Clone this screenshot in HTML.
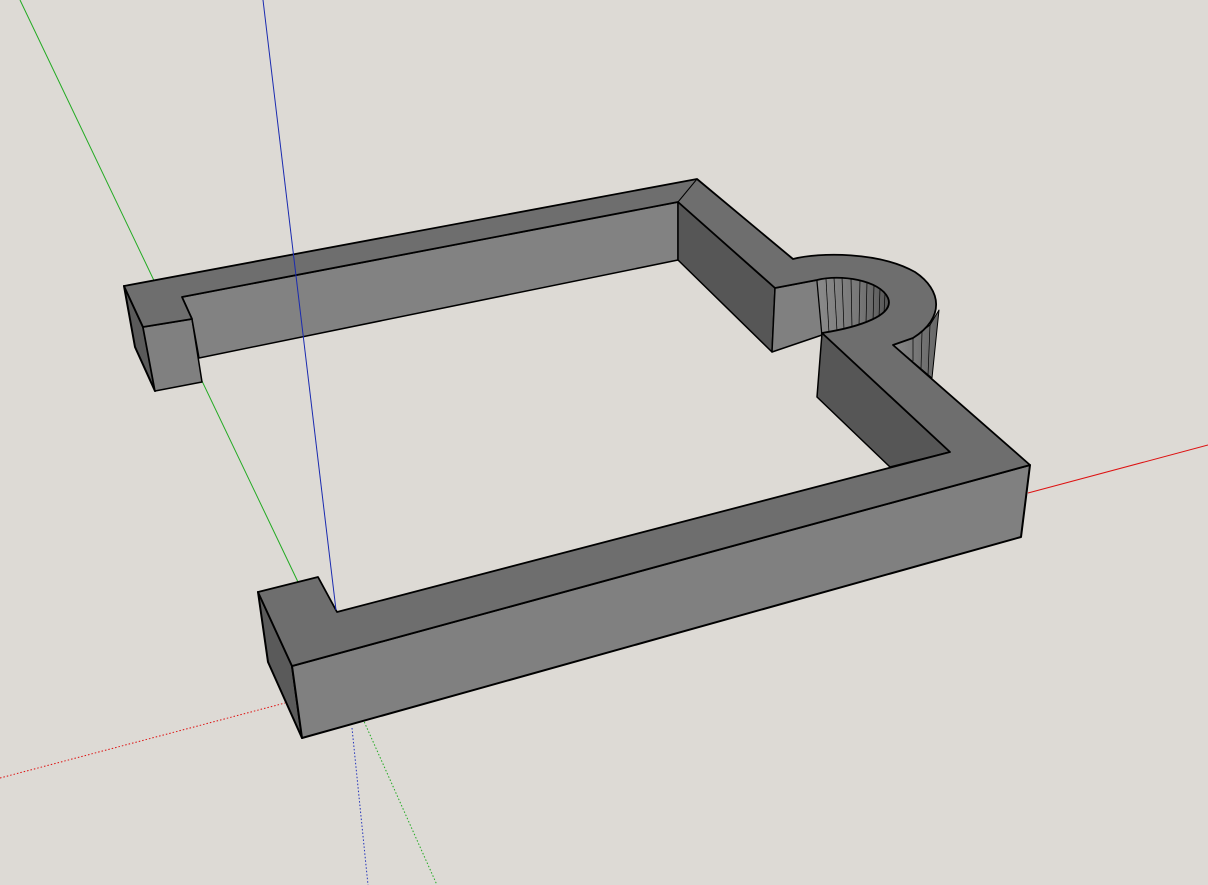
<!DOCTYPE html>
<html><head><meta charset="utf-8"><style>html,body{margin:0;padding:0;background:#dddad5;}svg{display:block}</style></head>
<body>
<svg width="1208" height="885" viewBox="0 0 1208 885" xmlns="http://www.w3.org/2000/svg">
<rect width="1208" height="885" fill="#dddad5"/>
<line x1="20" y1="0" x2="298" y2="582" stroke="#22aa22" stroke-width="1"/>
<line x1="350" y1="690" x2="437" y2="885" stroke="#22aa22" stroke-width="1" stroke-dasharray="1.5,2"/>
<line x1="1028" y1="493" x2="1208" y2="445" stroke="#dd1111" stroke-width="1"/>
<line x1="0" y1="778" x2="285" y2="703" stroke="#dd1111" stroke-width="1" stroke-dasharray="1.5,2"/>
<line x1="352" y1="728" x2="368" y2="885" stroke="#2233bb" stroke-width="1" stroke-dasharray="1.5,2"/>
<defs>
<linearGradient id="cy" x1="0" x2="1" y1="0" y2="0">
<stop offset="0" stop-color="#8a8a8a"/><stop offset="0.6" stop-color="#777"/><stop offset="1" stop-color="#555"/>
</linearGradient>
<linearGradient id="cy2" x1="0" x2="1" y1="0" y2="0">
<stop offset="0" stop-color="#888"/><stop offset="1" stop-color="#666"/>
</linearGradient>
</defs>
<g stroke="#000" stroke-linejoin="round">
<polygon points="124,286 143,327 155,391 135,347" fill="#5a5a5a" stroke-width="2"/>
<polygon points="143,327 192,319 202,382 155,391" fill="#808080" stroke-width="1.5"/>
<polygon points="182,297 678,202 678,260 199,358 192,319" fill="#828282" stroke-width="1.5"/>
<polygon points="678,202 775,288 772,352 678,260" fill="#565656" stroke-width="1.5"/>
<polygon points="775,288 817,280 822,335 772,352" fill="#808080" stroke-width="1.5"/>
<path d="M817,280 C840,274 880,280 888,298 C895,315 860,327 822,335 Z" fill="url(#cy)" stroke-width="1"/>
<g stroke-width="0.7"><line x1="826" y1="279" x2="829" y2="333"/><line x1="834" y1="278" x2="837" y2="331"/><line x1="842" y1="277" x2="844" y2="330"/><line x1="851" y1="278" x2="852" y2="328"/><line x1="860" y1="280" x2="859" y2="326"/><line x1="867" y1="282" x2="866" y2="323"/><line x1="874" y1="285" x2="873" y2="321"/><line x1="880" y1="289" x2="879" y2="318"/><line x1="885" y1="294" x2="884" y2="313"/></g>
<polygon points="893,345 913,338 930,325 939,310 932,378" fill="url(#cy2)" stroke-width="1"/>
<g stroke-width="0.7"><line x1="913" y1="338" x2="913" y2="361"/><line x1="922" y1="332" x2="921" y2="369"/><line x1="930" y1="325" x2="928" y2="375"/></g>
<polygon points="822,333 950,452 890,467 817,397" fill="#565656" stroke-width="1.5"/>
<polygon points="258,592 292,666 302,738 268,662" fill="#5a5a5a" stroke-width="2"/>
<polygon points="292,666 1030,465 1021,537 302,738" fill="#808080" stroke-width="2"/>
<path d="M258,592 L318,577 L337,612 L950,452 L822,333 C860,327 895,315 888,298 C880,280 840,274 817,280 L775,288 L678,202 L182,297 L192,319 L143,327 L124,286 L697,179 L793,259 C820,252 880,252 915,272 C942,290 945,318 913,338 L893,345 L1030,465 L292,666 Z" fill="#6e6e6e" stroke-width="1.8"/>
<line x1="678" y1="202" x2="697" y2="179" stroke-width="1"/>
</g>
<line x1="263" y1="0" x2="336" y2="610" stroke="#1a2ab0" stroke-width="1"/>
</svg>
</body></html>
